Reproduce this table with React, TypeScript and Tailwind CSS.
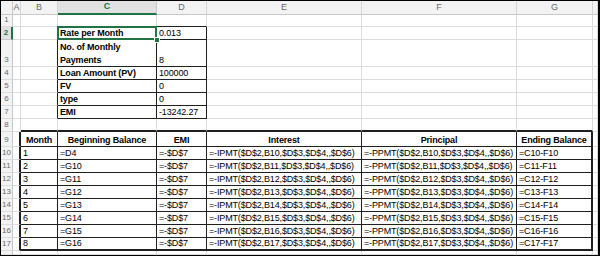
import React from 'react';

type Edge = 'grid' | 'thin' | 'thick';

const rightCls: Record<Edge, string> = {
  grid: 'border-r border-r-[#dadcdd]',
  thin: 'border-r border-r-[#1f1f1f]',
  thick: 'border-r-2 border-r-[#1f1f1f]',
};

const bottomCls: Record<Edge, string> = {
  grid: 'border-b border-b-[#dadcdd]',
  thin: 'border-b border-b-[#1f1f1f]',
  thick: 'border-b-2 border-b-[#1f1f1f]',
};

const LETTERS = ['', 'A', 'B', 'C', 'D', 'E', 'F', 'G', ''];
const ROW_COUNT = 19; // header + rows 1..17 + a sliver of row 18

type CellData = { text: React.ReactNode; bold?: boolean; center?: boolean };

// sheet contents keyed by "row,col" (col 1 = A)
const data: Record<string, CellData> = {
  '2,3': { text: 'Rate per Month', bold: true },
  '2,4': { text: '0.013' },
  '3,3': { text: <>No. of Monthly<br />Payments</>, bold: true },
  '3,4': { text: '8' },
  '4,3': { text: 'Loan Amount (PV)', bold: true },
  '4,4': { text: '100000' },
  '5,3': { text: 'FV', bold: true },
  '5,4': { text: '0' },
  '6,3': { text: 'type', bold: true },
  '6,4': { text: '0' },
  '7,3': { text: 'EMI', bold: true },
  '7,4': { text: '-13242.27' },
  '9,2': { text: 'Month', bold: true, center: true },
  '9,3': { text: 'Beginning Balance', bold: true, center: true },
  '9,4': { text: 'EMI', bold: true, center: true },
  '9,5': { text: 'Interest', bold: true, center: true },
  '9,6': { text: 'Principal', bold: true, center: true },
  '9,7': { text: 'Ending Balance', bold: true, center: true },
};

for (let m = 1; m <= 8; m++) {
  const r = m + 9;
  data[`${r},2`] = { text: String(m) };
  data[`${r},3`] = { text: m === 1 ? '=D4' : `=G${r - 1}` };
  data[`${r},4`] = { text: '=-$D$7' };
  data[`${r},5`] = { text: `=-IPMT($D$2,B${r},$D$3,$D$4,,$D$6)` };
  data[`${r},6`] = { text: `=-PPMT($D$2,B${r},$D$3,$D$4,,$D$6)` };
  data[`${r},7`] = { text: `=C${r}-F${r}` };
}

function rightEdge(r: number, c: number): Edge {
  if (r >= 2 && r <= 7 && c >= 2 && c <= 4) return 'thin';
  if (r >= 9 && r <= 17) {
    if (c === 1 || c === 7) return 'thick';
    if (c >= 2 && c <= 6) return 'thin';
  }
  return 'grid';
}

function bottomEdge(r: number, c: number): Edge {
  if (c >= 3 && c <= 4 && r >= 1 && r <= 7) return 'thin';
  if (c >= 2 && c <= 7) {
    if (r === 8 || r === 17) return 'thick';
    if (r >= 9 && r <= 16) return 'thin';
  }
  return 'grid';
}

function ColumnHeader({ c }: { c: number }) {
  if (c === 0) {
    return <div className="bg-[#f3f3f3] border-r border-r-[#c8c8c8] border-b border-b-[#c8c8c8]" />;
  }
  if (c === 3) {
    return (
      <div className="bg-[#e1e1e1] border-r border-r-[#c8c8c8] border-b-2 border-b-[#217346] flex items-center justify-center text-[9px] font-bold text-[#217346]">
        C
      </div>
    );
  }
  return (
    <div className="bg-[#f3f3f3] border-r border-r-[#d4d4d4] border-b border-b-[#c8c8c8] flex items-center justify-center text-[9px] text-[#6a6a6a]">
      {LETTERS[c]}
    </div>
  );
}

function RowHeader({ r }: { r: number }) {
  const label = r <= 17 ? r : '';
  if (r === 2) {
    return (
      <div className="bg-[#e1e1e1] border-r-2 border-r-[#217346] border-b border-b-[#c8c8c8] flex items-end justify-center text-[8px] leading-[12px] font-bold text-[#217346]">
        {label}
      </div>
    );
  }
  return (
    <div className="bg-[#f3f3f3] border-r border-r-[#c8c8c8] border-b border-b-[#dadcdd] flex items-end justify-center text-[8px] leading-[12px] text-[#6a6a6a]">
      {label}
    </div>
  );
}

function Cell({ r, c }: { r: number; c: number }) {
  const cell = data[`${r},${c}`];
  const selected = r === 2 && c === 3;
  return (
    <div
      className={`relative flex items-end overflow-visible px-[2px] leading-[12.5px] tracking-[-0.15px] text-black ${
        cell?.center ? 'justify-center' : 'justify-start'
      } ${rightCls[rightEdge(r, c)]} ${bottomCls[bottomEdge(r, c)]}`}
    >
      {cell && (
        <span className={`whitespace-nowrap ${cell.bold ? 'font-bold' : ''}`}>
          {cell.text}
        </span>
      )}
      {selected && (
        <>
          <div className="absolute -left-px -top-px -right-px -bottom-px z-10 border-2 border-[#217346]" />
          <div className="absolute -right-[4px] -bottom-[4px] z-20 w-[6px] h-[6px] bg-[#217346] border border-white" />
        </>
      )}
    </div>
  );
}

export default function App() {
  const rows = Array.from({ length: ROW_COUNT }, (_, r) => r);
  const cols = Array.from({ length: LETTERS.length }, (_, c) => c);

  return (
    <div className="w-[600px] h-[256px] bg-white border border-black border-r-2 overflow-hidden">
      <div
        className="grid h-full font-['Liberation_Sans',Arial,sans-serif] text-[9px] grid-cols-[12px_8px_37px_99px_50px_155px_155px_76px_1fr] grid-rows-[14px_12px_13px_27px_13px_13px_13px_13px_13px_15px_13px_13px_13px_13px_13px_13px_13px_13px_1fr]"
      >
        {rows.map((r) =>
          cols.map((c) => {
            if (r === 0) return <ColumnHeader key={`${r}-${c}`} c={c} />;
            if (c === 0) return <RowHeader key={`${r}-${c}`} r={r} />;
            return <Cell key={`${r}-${c}`} r={r} c={c} />;
          })
        )}
      </div>
    </div>
  );
}
